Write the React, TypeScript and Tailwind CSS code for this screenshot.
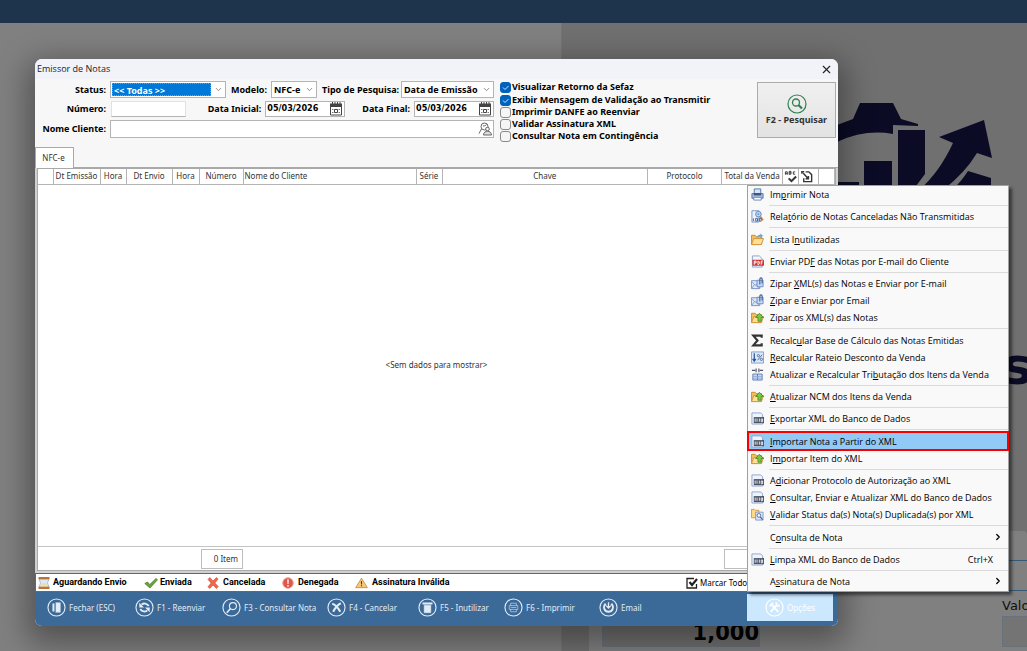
import type { ReactNode } from "react";
import { FiX, FiChevronDown, FiChevronRight } from "react-icons/fi";

type IconName =
  | "printer"
  | "report"
  | "folder"
  | "pdf"
  | "mail"
  | "folderUp"
  | "sigma"
  | "percent"
  | "split"
  | "xml"
  | "folderSearch";

type MenuEntry = {
  icon?: IconName;
  before: string;
  key: string;
  after: string;
  shortcut?: string;
  sub?: boolean;
  active?: boolean;
};

const menuGroups: MenuEntry[][] = [
  [{ icon: "printer", before: "Im", key: "p", after: "rimir Nota" }],
  [{ icon: "report", before: "Rela", key: "t", after: "ório de Notas Canceladas Não Transmitidas" }],
  [{ icon: "folder", before: "Lista I", key: "n", after: "utilizadas" }],
  [{ icon: "pdf", before: "Enviar PD", key: "F", after: " das Notas por E-mail do Cliente" }],
  [
    { icon: "mail", before: "Zipar ", key: "X", after: "ML(s) das Notas e Enviar por E-mail" },
    { icon: "mail", before: "", key: "Z", after: "ipar e Enviar por Email" },
    { icon: "folderUp", before: "Zipar os XML(s) das Notas", key: "", after: "" },
  ],
  [
    { icon: "sigma", before: "Recalc", key: "u", after: "lar Base de Cálculo das Notas Emitidas" },
    { icon: "percent", before: "", key: "R", after: "ecalcular Rateio Desconto da Venda" },
    { icon: "split", before: "Atualizar e Recalcular Tri", key: "b", after: "utação dos Itens da Venda" },
  ],
  [{ icon: "folderUp", before: "", key: "A", after: "tualizar NCM dos Itens da Venda" }],
  [{ icon: "xml", before: "", key: "E", after: "xportar XML do Banco de Dados" }],
  [
    { icon: "xml", before: "", key: "I", after: "mportar Nota a Partir do XML", active: true },
    { icon: "folderUp", before: "I", key: "m", after: "portar Item do XML" },
  ],
  [
    { icon: "xml", before: "A", key: "d", after: "icionar Protocolo de Autorização ao XML" },
    { icon: "xml", before: "", key: "C", after: "onsultar, Enviar e Atualizar XML do Banco de Dados" },
    { icon: "folderSearch", before: "", key: "V", after: "alidar Status da(s) Nota(s) Duplicada(s) por XML" },
  ],
  [{ before: "C", key: "o", after: "nsulta de Nota", sub: true }],
  [{ icon: "xml", before: "", key: "L", after: "impa XML do Banco de Dados", shortcut: "Ctrl+X" }],
  [{ before: "A", key: "s", after: "sinatura de Nota", sub: true }],
];

function Folder() {
  return (
    <>
      <path d="M.5 12V2.500h4l1 1.500h6V12z" fill="#f0bf62" stroke="#c68a32" />
      <path d="M.5 12.500 3 6h10.500L11 12.500z" fill="#ffdf94" stroke="#cf9138" />
    </>
  );
}

function MenuIcon({ name }: { name: IconName }) {
  return (
    <svg viewBox="0 0 14 14" className="h-[13px] w-[13px]" fill="none">
      {name === "printer" && (
        <>
          <path d="M3.500 1h7v5h-7z" fill="#d6e8fb" stroke="#5173a8" />
          <path d="M1 6h12v5H1z" fill="#a9c0e4" stroke="#5470a4" />
          <path d="M3 5.500h8V8H3z" fill="#3e557d" />
          <path d="M3 10h8v3H3z" fill="#fff" stroke="#6a86b8" />
        </>
      )}
      {name === "report" && (
        <>
          <path d="M1 .8h7.500V13H1z" fill="#edf3fd" stroke="#7893c8" />
          <circle cx="8" cy="4.500" r="3" fill="#c3ddf6" stroke="#5c7eb8" />
          <circle cx="8" cy="4.500" r="1" fill="#5c8fd0" />
          <path d="m10 7 3 4" stroke="#d18a4b" strokeWidth="2" />
          <path d="M2.500 9v3M5 9h2v3H5zM9 9h2v3H9z" stroke="#4c5f86" />
        </>
      )}
      {name === "folder" && (
        <>
          <Folder />
          <path d="M6 5c1-3 3-3.500 4-3V.5L13 3l-3 2.500V4C8 4 7 4 6 5z" fill="#6fa5dc" />
        </>
      )}
      {name === "folderUp" && (
        <>
          <Folder />
          <path d="M9 2.500 13.500 7H11v4H7.500V7H5z" fill="#7ac943" stroke="#3a7f1e" strokeWidth=".8" />
        </>
      )}
      {name === "pdf" && (
        <>
          <path d="M1.500 1H9l3 3v9H1.500z" fill="#f4f7ff" stroke="#8aa0cd" />
          <rect x="1.500" y="5" width="12.500" height="6.500" rx=".8" fill="#d12f2c" />
          <path d="M3.500 10.500v-4h2v2h-2M7.500 6.500H8l1 1v2l-1 1h-.5zM11 10.500v-4h2M11 8.500h1.500" stroke="#fff" />
        </>
      )}
      {name === "mail" && (
        <>
          <path d="M.5 4h9v8.500h-9z" fill="#dce7f9" stroke="#7790c0" />
          <path d="m1 5 3.500 4L9 5M1 12l2.500-3.500M9 12 5.500 8.500" stroke="#8aa2cf" />
          <path d="M6.500 3.500h6.500v7H6.500z" fill="#c9daf4" stroke="#6e8bc2" />
          <path d="M9.500 8V2.500c0-2 2.500-2 2.500 0V7" stroke="#3c609f" strokeWidth="1.200" />
        </>
      )}
      {name === "sigma" && (
        <path d="M11.500 4V1.800H2.500L7 7l-4.500 5.200h9V10" stroke="#333" strokeWidth="2.300" />
      )}
      {name === "percent" && (
        <>
          <path d="M.5 1h13v12H.5z" fill="#dce9fb" stroke="#7f9dce" />
          <path d="M3.500 2.500v8M1.800 8.500l1.700 2.500 1.700-2.500" stroke="#24559b" strokeWidth="1.300" />
          <path d="m7 10 5-6" stroke="#53698f" />
          <circle cx="8" cy="5" r="1.200" stroke="#53698f" />
          <circle cx="11.200" cy="9" r="1.200" stroke="#53698f" />
        </>
      )}
      {name === "split" && (
        <>
          <path d="M1 2.500h3.500M9.500 2.500H13M5.500.5v4M8.500.5v4" stroke="#4c5668" strokeWidth="1.200" />
          <path d="M2 6.500h5v6.500H2zM7 6.500h5v6.500H7z" fill="#cfe0f8" stroke="#5f7cb2" />
          <path d="M2 9h10M2 11h10" stroke="#8ea8d6" />
        </>
      )}
      {name === "xml" && (
        <>
          <path d="M1 1h9.500l2 2v10H1z" fill="#eef3fc" stroke="#8ea5d0" />
          <path d="M3 5.500h11v6.500H3z" fill="#4a5263" />
          <path d="M4.500 7v3.500M6.500 7v3.500M9 7v3.500M11 7.500h1.500v3H11z" stroke="#fff" strokeWidth=".9" />
        </>
      )}
      {name === "folderSearch" && (
        <>
          <path d="M.5 10.500V1.500h3l1 1h4v8z" fill="#ffd98b" stroke="#cf9a45" />
          <path d="M5 4.500h8V13H5z" fill="#dfe8f8" stroke="#7f97c7" />
          <circle cx="8.500" cy="8" r="2" fill="#fff" stroke="#4d6799" />
          <path d="m10 9.500 2.500 3" stroke="#4d6799" strokeWidth="1.400" />
        </>
      )}
    </svg>
  );
}

function OptionsMenu() {
  return (
    <div
      role="menu"
      className="absolute bottom-full left-0 mb-[2px] flex h-[407px] w-[262px] flex-col border border-[#a0a0a0] bg-[#f9f9f9] pb-px font-['Open_Sans',sans-serif] text-[9px] text-black shadow-[3px_3px_3px_rgba(0,0,0,0.5)]"
    >
      {menuGroups.map((group, i) => (
        <div key={i} className="contents">
          {i > 0 && (
            <div className="flex h-[5px] shrink-0 items-center pl-[21px]">
              <div className="h-px w-full bg-[#dadada]" />
            </div>
          )}
          {group.map((item) => (
            <button
              key={item.before + item.key + item.after}
              type="button"
              role="menuitem"
              className={
                item.active
                  ? "relative flex flex-1 items-center bg-[#91c9f7] pl-[3px] pr-[5px] text-left outline-2 -outline-offset-1 outline-[#f80000]"
                  : "flex flex-1 items-center pl-[3px] pr-[5px] text-left"
              }
            >
              <span className="w-[19px] shrink-0">{item.icon && <MenuIcon name={item.icon} />}</span>
              <span className="flex-1 whitespace-pre leading-[15px]">
                {item.before}
                <u>{item.key}</u>
                {item.after}
              </span>
              {item.shortcut && <span className="mr-[10px]">{item.shortcut}</span>}
              {item.sub && <FiChevronRight className="h-[10px] w-[10px]" strokeWidth={3} />}
            </button>
          ))}
        </div>
      ))}
    </div>
  );
}

const fieldBox = "flex items-center border border-[#b4b4b4] bg-white";

function SelectBox({ id, value, className }: { id: string; value: string; className: string }) {
  return (
    <div className={`${fieldBox} relative h-[17px] shrink-0 ${className}`}>
      <select id={id} defaultValue={value} className="h-full w-full appearance-none bg-transparent pl-[2px] font-bold outline-none">
        <option>{value}</option>
      </select>
      <FiChevronDown className="pointer-events-none absolute right-[2px] h-[9px] w-[9px] text-[#666]" />
    </div>
  );
}

function DateBox({ id }: { id: string }) {
  return (
    <div className={`${fieldBox} h-[16px] w-[80px] shrink-0 pr-px`}>
      <input
        id={id}
        defaultValue="05/03/2026"
        className="w-full min-w-0 pl-px font-['DejaVu_Sans_Condensed','DejaVu_Sans',sans-serif] text-[9px] font-bold outline-none"
      />
      <svg viewBox="0 0 14 14" className="h-[14px] w-[14px] shrink-0" fill="none">
        <path d="M1 1.500h12V5H1z" fill="#444" />
        <path d="M1.500 5v8h11V5M3.500 0v3M6 0v3M8.500 0v3M11 0v3" stroke="#444" />
        <path d="M3 7.500h1.500M3 10.500h1.500M9.500 7.500H11M9.500 10.500H11" stroke="#777" />
        <path d="M5.500 7.500h3v3h-3z" stroke="#444" />
      </svg>
    </div>
  );
}

const checks = [
  { label: "Visualizar Retorno da Sefaz", on: true },
  { label: "Exibir Mensagem de Validação ao Transmitir", on: true },
  { label: "Imprimir DANFE ao Reenviar", on: false },
  { label: "Validar Assinatura XML", on: false },
  { label: "Consultar Nota em Contingência", on: false },
];

function SearchForm() {
  return (
    <form className="flex gap-[6px] pl-[3px] pr-[2px] pt-[2px] font-['Noto_Sans',sans-serif] text-[9px] font-bold text-black">
      <div className="w-[456px] shrink-0">
        <div className="flex items-center">
          <label htmlFor="status" className="w-[68px] text-right">Status:</label>
          <div className={`${fieldBox} relative ml-1 h-[17px] w-[116px] shrink-0 p-px`}>
            <select
              id="status"
              defaultValue="<< Todas >>"
              className="h-full w-[99px] appearance-none border border-dotted border-[#e0862b] bg-[#0078d7] pl-px font-bold text-white outline-none"
            >
              <option>{"<< Todas >>"}</option>
            </select>
            <FiChevronDown className="pointer-events-none absolute right-[2px] h-[9px] w-[9px] text-[#666]" />
          </div>
          <label htmlFor="modelo" className="ml-[5px] w-[36px] whitespace-nowrap">Modelo:</label>
          <SelectBox id="modelo" value="NFC-e" className="ml-1 w-[46px]" />
          <label htmlFor="tipo" className="ml-[5px] w-[76px] whitespace-nowrap">Tipo de Pesquisa:</label>
          <SelectBox id="tipo" value="Data de Emissão" className="ml-auto w-[93px]" />
        </div>
        <div className="mt-[3px] flex items-center">
          <label htmlFor="numero" className="w-[68px] text-right">Número:</label>
          <input id="numero" className="ml-[5px] h-[16px] w-[75px] border border-[#e2e2e2] border-b-[#b4b4b4] bg-white outline-none" />
          <label htmlFor="inicial" className="ml-auto mr-1 whitespace-nowrap">Data Inicial:</label>
          <DateBox id="inicial" />
          <label htmlFor="final" className="ml-[17px] mr-1 whitespace-nowrap">Data Final:</label>
          <DateBox id="final" />
        </div>
        <div className="mt-[3px] flex items-center">
          <label htmlFor="cliente" className="w-[68px] whitespace-nowrap text-right">Nome Cliente:</label>
          <div className={`${fieldBox} ml-1 h-[18px] flex-1 pr-px`}>
            <input id="cliente" className="min-w-0 flex-1 outline-none" />
            <svg viewBox="0 0 14 14" className="h-[14px] w-[14px]" fill="none" stroke="#666">
              <circle cx="6.500" cy="4.500" r="3.500" />
              <path d="M3.500 7 1 11.500M5 4c2 0 3-1 3.500-1.500" />
              <circle cx="9.500" cy="7" r="1.800" fill="#fff" />
              <path d="M5.500 13c0-5 8-5 8 0z" fill="#ddd" />
            </svg>
          </div>
        </div>
      </div>

      <div className="flex-1">
        {checks.map((c, i) => (
          <label key={c.label} className={i === 1 ? "mt-px flex h-[12px] items-center gap-px" : "flex h-[12px] items-center gap-px"}>
            <span className="relative flex shrink-0">
              <input
                type="checkbox"
                defaultChecked={c.on}
                className="h-[11px] w-[11px] appearance-none rounded-[3px] border border-[#8a8a8a] bg-[#f5f5f5] checked:border-[#0062bd] checked:bg-[#0062bd]"
              />
              {c.on && (
                <svg viewBox="0 0 11 11" className="pointer-events-none absolute inset-0" fill="none" stroke="#cfe2f5">
                  <path d="m3 5.500 2 2L8.500 4" />
                </svg>
              )}
            </span>
            <span className="whitespace-nowrap">{c.label}</span>
          </label>
        ))}
      </div>

      <button
        type="button"
        className="mt-px flex h-[56px] w-[79px] flex-col items-center justify-center border border-[#ababab] bg-linear-to-b from-[#f0f0f0] to-[#e3e3e3] text-[#333]"
      >
        <svg viewBox="0 0 20 20" className="h-[20px] w-[20px]" fill="none" stroke="#2f7f50">
          <circle cx="10" cy="10" r="9" strokeWidth="1.200" />
          <circle cx="9" cy="8.500" r="3.500" strokeWidth="1.300" />
          <path d="m11.500 11 3.500 3.500" strokeWidth="2.200" />
        </svg>
        <span className="leading-[12px]">F2 - Pesquisar</span>
      </button>
    </form>
  );
}

const columns: { title: ReactNode; width: string; align: string }[] = [
  { title: "", width: "w-[15px]", align: "" },
  { title: "Dt Emissão", width: "w-[47px]", align: "text-center" },
  { title: "Hora", width: "w-[26px]", align: "text-center" },
  { title: "Dt Envio", width: "w-[46px]", align: "text-center" },
  { title: "Hora", width: "w-[27px]", align: "text-center" },
  { title: "Número", width: "w-[44px]", align: "text-center" },
  { title: "Nome do Cliente", width: "w-[173px]", align: "text-left pl-px" },
  { title: "Série", width: "w-[26px]", align: "text-center" },
  { title: "Chave", width: "", align: "text-center" },
  { title: "Protocolo", width: "w-[74px]", align: "text-center" },
  { title: "Total da Venda", width: "w-[61px]", align: "text-center" },
  {
    title: (
      <svg viewBox="0 0 14 14" className="mx-auto h-[13px] w-[14px]" fill="none" stroke="#333">
        <path d="M1 5V2h2v3M1 4h2M5 5V1.500h2v3H5M5 3h2M11.500 2H9.500v2.500h2" />
        <path d="m4.500 9 3 3L12.500 7" strokeWidth="2.200" />
      </svg>
    ),
    width: "w-[16px]",
    align: "",
  },
  {
    title: (
      <svg viewBox="0 0 14 14" className="ml-px h-[13px] w-[14px]" fill="none" stroke="#333" strokeWidth="1.500">
        <path d="M5.500 2h3.500l3 3v7.500H3.500V9" />
        <path d="M3 3.500 8.500 9.500M8.500 6.500v3h-3M1.500 4V2h2.500" strokeWidth="1.600" />
      </svg>
    ),
    width: "w-[20px]",
    align: "",
  },
  { title: "", width: "w-[16px]", align: "" },
];

function NotesGrid() {
  return (
    <div className="flex flex-1 flex-col border-t border-[#a9a9a9] bg-[#d0d0d0] px-[2px] pb-[2px] font-['Noto_Sans',sans-serif] text-[8px] text-[#333]">
      <div className="flex flex-1 flex-col border border-[#a9a9a9] bg-white">
        <table className="w-full table-fixed border-collapse">
          <thead>
            <tr className="h-[15px]">
              {columns.map((c, i) => (
                <th
                  key={i}
                  className={`${c.width} ${c.align} whitespace-nowrap border-b border-r border-[#b5b5b5] p-0 font-normal leading-[14px]`}
                >
                  {c.title}
                </th>
              ))}
            </tr>
          </thead>
        </table>
        <p className="flex flex-1 items-center justify-center">&lt;Sem dados para mostrar&gt;</p>
        <div className="flex h-[24px] items-center border-t border-[#c4c4c4]">
          <span className="ml-[163px] flex h-[20px] w-[42px] items-center justify-end border border-[#bdbdbd] pr-1">0 Item</span>
          <span className="ml-auto mr-[49px] h-[20px] w-[62px] border border-[#bdbdbd]" />
        </div>
      </div>
    </div>
  );
}

function StatusLegend() {
  return (
    <div className="flex h-[19px] items-center border border-[#2f8f2f] bg-white pl-[2px] font-['Roboto',sans-serif] text-[9px] font-bold text-black">
      <span className="flex w-[106px] items-center gap-[3px]">
        <svg viewBox="0 0 12 12" className="h-[12px] w-[12px]">
          <path d="M1 2h10L9.500 6l1.500 4H1l1.500-4z" fill="#dce8f5" stroke="#9aabc0" strokeWidth=".7" />
          <path d="M4 6h4l1.500 4h-7z" fill="#f1dcae" />
          <path d="M.5 0h11v2.200H.5zM.5 9.800h11V12H.5z" fill="#b5753b" />
        </svg>
        Aguardando Envio
      </span>
      <span className="flex w-[63px] items-center gap-[2px]">
        <svg viewBox="0 0 14 12" className="h-[12px] w-[14px]">
          <path d="M.8 6.500 3.500 5l2.300 2.500L12 1.500l1.500 1.200L6 11z" fill="#6ca43c" stroke="#43741f" strokeWidth=".7" />
        </svg>
        Enviada
      </span>
      <span className="flex w-[75px] items-center gap-1">
        <svg viewBox="0 0 12 12" className="h-[12px] w-[12px]">
          <path d="m1 2.500 1.800-2L6 4l3.500-3.500L11 2.200 7.800 6l3.400 3.500-1.700 2L6 8l-3.300 3.500L1 9.800 4.200 6z" fill="#f1674c" stroke="#cf4026" strokeWidth=".6" />
        </svg>
        Cancelada
      </span>
      <span className="flex w-[73px] items-center gap-1">
        <svg viewBox="0 0 12 12" className="h-[12px] w-[12px]">
          <circle cx="6" cy="6" r="5.300" fill="#e0564a" stroke="#eda59c" />
          <path d="M5.200 2.500h1.600L6.500 7h-1zM5.300 8h1.400v1.400H5.300z" fill="#fff" />
        </svg>
        Denegada
      </span>
      <span className="flex items-center gap-1">
        <svg viewBox="0 0 14 12" className="h-[12px] w-[13px]">
          <path d="M7 .8 13.300 11H.7z" fill="#f5c777" stroke="#c58b3c" strokeWidth=".9" />
          <path d="M6.300 4h1.400l-.3 3.500h-.8zM6.400 8.300h1.200v1.200H6.400z" fill="#333" />
        </svg>
        Assinatura Inválida
      </span>
      <label className="ml-auto mr-[86px] flex items-center gap-[2px] font-['Noto_Sans',sans-serif] text-[8px] font-normal">
        <span className="relative flex">
          <input type="checkbox" defaultChecked className="h-[12px] w-[12px] appearance-none" />
          <svg viewBox="0 0 12 12" className="pointer-events-none absolute inset-0" fill="none" stroke="#222">
            <path d="M8 1.500H1v9.500h9.500V7" strokeWidth="1.300" />
            <path d="m3.500 5 2.500 3L11 2" strokeWidth="2.200" />
          </svg>
        </span>
        Marcar Todos
      </label>
    </div>
  );
}

function RoundIcon({ children }: { children: ReactNode }) {
  return (
    <svg viewBox="0 0 20 20" className="h-[19px] w-[19px] shrink-0" fill="none" stroke="currentColor">
      <circle cx="10" cy="10" r="9" strokeWidth="1.200" />
      {children}
    </svg>
  );
}

const actions: { label: string; width: string; icon: ReactNode }[] = [
  {
    label: "Fechar (ESC)",
    width: "w-[88px]",
    icon: (
      <>
        <path d="M6 6h2v8H6zM9 5h5v10H9z" fill="currentColor" strokeWidth=".5" />
        <path d="M8.500 5v10" stroke="#3b6998" />
      </>
    ),
  },
  {
    label: "F1 - Reenviar",
    width: "w-[87px]",
    icon: (
      <>
        <path d="M14.500 8.500C12.500 5.500 9 5 7 7M5.500 11.500c2 3 5.500 3.500 7.500 1.500" strokeWidth="2" />
        <path d="M4.500 5v5h5zM15.500 15v-5h-5z" fill="currentColor" stroke="none" />
      </>
    ),
  },
  {
    label: "F3 - Consultar Nota",
    width: "w-[105px]",
    icon: (
      <>
        <circle cx="11.500" cy="8.500" r="3.700" strokeWidth="1.200" />
        <path d="m9 11-4 4.500" strokeWidth="1.700" />
      </>
    ),
  },
  {
    label: "F4 - Cancelar",
    width: "w-[91px]",
    icon: <path d="M5.500 6c2 .5 6 4 8.500 8.500M14.500 5.500c-3 1.500-6 5-8 9" strokeWidth="2.200" />,
  },
  {
    label: "F5 - Inutilizar",
    width: "w-[86px]",
    icon: <path d="M5 5h10v1.500H5zM6.500 7.500h7v8h-7z" fill="currentColor" strokeWidth=".5" />,
  },
  {
    label: "F6 - Imprimir",
    width: "w-[95px]",
    icon: <path d="M7 8V5.500h6V8M5.500 8h9v4h-9zM7 12v2.500h6V12M7 10h6" opacity=".6" />,
  },
  {
    label: "Email",
    width: "w-[60px]",
    icon: (
      <>
        <path d="M7 6c-3.500 4-1 8.500 3 8.500S16.500 10 13 6" strokeWidth="2" />
        <path d="M10 4.500V10M7.500 8l2.500 2.500L12.500 8" strokeWidth="1.400" />
      </>
    ),
  },
];

function Toolbar() {
  return (
    <div className="flex h-[34px] items-start rounded-b-[7px] bg-[#3b6998] pl-[12px] pr-[5px] pt-[2px] font-['Noto_Sans',sans-serif] text-[8px] text-[#e3ecf5]">
      {actions.map((a) => (
        <button key={a.label} type="button" className={`${a.width} flex h-[27px] shrink-0 items-center gap-[3px] whitespace-nowrap`}>
          <RoundIcon>{a.icon}</RoundIcon>
          {a.label}
        </button>
      ))}
      <div className="relative ml-auto">
        <button type="button" aria-haspopup="menu" className="flex h-[27px] w-[86px] items-center justify-center gap-[3px] bg-[#cce8ff] text-white">
          <RoundIcon>
            <path d="m7 7 7 7.500M13 7l-7 7.500" strokeWidth="2" />
            <path d="M5 8.500 8.500 5M12 4.500v3.500h3.500" strokeWidth="1.800" />
          </RoundIcon>
          Opções
        </button>
        <OptionsMenu />
      </div>
    </div>
  );
}

function Backdrop() {
  return (
    <div className="flex flex-1">
      <div className="w-[55%] max-w-[562px] border-r border-[#757575] bg-[#808080]" />
      <div className="flex flex-1 flex-col bg-[#707070]">
        <div className="relative flex-1">
          <svg viewBox="0 0 190 100" className="absolute right-0 top-[80px] h-[100px] w-[190px]" fill="#0b0b25">
            <path d="M0 22 16 16 23 0h33l8 16 17 5v2l-25-1v9Q28 26 0 39z" />
            <path d="M61 27h27v44L76 87H61zM27 58h28v29H27zM0 79h22v8H0z" />
            <path d="m102 34 45-17 8 38-15-5q-12 20-34 37H82q20-17 34-47z" />
            <path d="m131 68 23 7v12h-39q9-8 16-19z" />
          </svg>
          <span className="absolute -right-[6px] bottom-[139px] font-['DejaVu_Sans',sans-serif] text-[52px] font-bold leading-[52px] text-[#0b0b25]">s</span>
        </div>
        <div className="ml-[27px] flex h-[120px] flex-col rounded-tr-[4px] bg-[#808080] font-['DejaVu_Sans',sans-serif] text-black">
          <div className="mt-[29px] h-[31px] border-y border-[#355a78]" />
          <div className="flex items-end justify-between pl-[13px]">
            <input
              aria-label="Quantidade"
              defaultValue="1,000"
              className="h-[56px] w-[158px] border border-[#69717c] bg-[#707070] pt-[28px] text-right text-[21px] font-bold outline-none"
            />
            <div className="w-[25px] overflow-hidden">
              <label htmlFor="valor" className="block whitespace-nowrap text-[13px] leading-[16px] text-[#111]">Valor</label>
              <input id="valor" className="mt-[2px] h-[31px] w-[120px] border border-[#69717c] bg-[#747474] outline-none" />
            </div>
          </div>
        </div>
      </div>
    </div>
  );
}

export default function App() {
  return (
    <div className="relative flex min-h-screen flex-col overflow-hidden">
      <header className="h-[23px] bg-[#1e344d]" />
      <Backdrop />
      <div
        role="dialog"
        aria-labelledby="titulo"
        className="absolute bottom-[25px] left-[35px] right-[189px] top-[59px] flex flex-col rounded-[7px] bg-[#f7f7f7] shadow-[0_10px_30px_8px_rgba(0,0,0,0.35)]"
      >
        <div className="flex h-[20px] items-center justify-between rounded-t-[7px] bg-[#f1f3f9] pl-[2px] pr-[5px]">
          <h1 id="titulo" className="font-['Open_Sans',sans-serif] text-[9px] text-[#222]">Emissor de Notas</h1>
          <button type="button" aria-label="Fechar">
            <FiX className="h-[13px] w-[13px] text-[#222]" />
          </button>
        </div>
        <SearchForm />
        <div className="flex h-[25px] items-end">
          <button type="button" className="relative -mb-px h-[21px] w-[39px] border border-b-0 border-[#a9a9a9] bg-white pr-[2px] font-['Noto_Sans',sans-serif] text-[8px] text-[#333]">
            NFC-e
          </button>
        </div>
        <NotesGrid />
        <StatusLegend />
        <Toolbar />
      </div>
    </div>
  );
}
